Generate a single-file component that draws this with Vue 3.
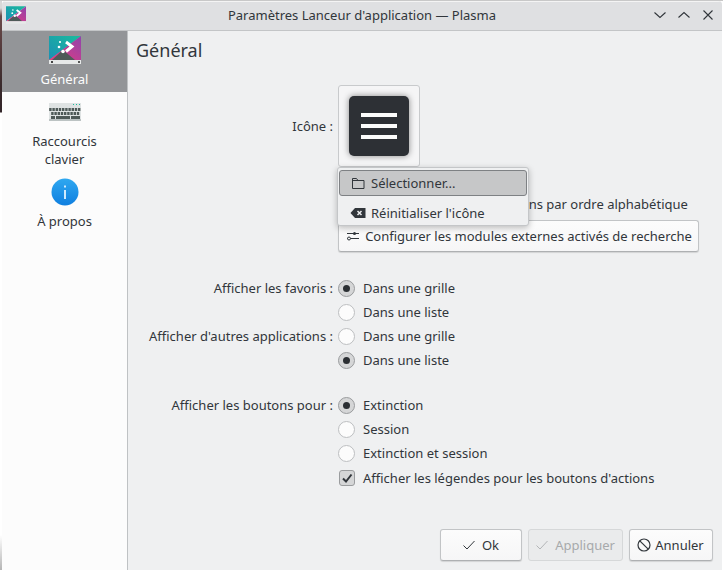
<script setup>
const nav = [
  { id: 'general', label: 'Général', active: true },
  { id: 'keys', label: 'Raccourcis clavier' },
  { id: 'about', label: 'À propos' }
]
const groups = [
  { label: 'Afficher les favoris :', gap: 24, items: [{ t: 'Dans une grille', on: true }, { t: 'Dans une liste' }] },
  { label: "Afficher d'autres applications :", gap: 0, items: [{ t: 'Dans une grille' }, { t: 'Dans une liste', on: true }] },
  { label: 'Afficher les boutons pour :', gap: 21, items: [{ t: 'Extinction', on: true }, { t: 'Session' }, { t: 'Extinction et session' }] }
]
</script>

<template>
  <div class="desktop">
    <div class="window">
      <header class="titlebar">
        <svg class="app-icon" width="20" height="18" viewBox="0 0 32 28">
          <defs>
            <linearGradient id="tealA" x1="0" y1="1" x2="1" y2="0"><stop offset="0" stop-color="#1b8fb5" /><stop offset="1" stop-color="#1abc9c" /></linearGradient>
            <linearGradient id="magA" x1="1" y1="0" x2="0" y2="1"><stop offset="0" stop-color="#8e44ad" /><stop offset="1" stop-color="#e93a7d" /></linearGradient>
          </defs>
          <polygon points="0,0 32,0 0,24" fill="url(#tealA)" />
          <polygon points="32,0 32,24 0,24" fill="url(#magA)" />
          <polygon points="3,24 14,14 26,24" fill="#4f5a58" />
          <path d="M17 6l6 4.500-6 5" fill="none" stroke="#fff" stroke-width="3" />
          <circle cx="11" cy="6" r="1.300" fill="#fff" /><circle cx="10" cy="11" r="1.500" fill="#fff" /><circle cx="14" cy="15" r="2" fill="#fff" />
          <rect y="24" width="32" height="4" fill="#e6e8e8" />
        </svg>
        <span class="title">Paramètres Lanceur d'application — Plasma</span>
        <div class="controls">
          <svg width="14" height="14" viewBox="0 0 14 14"><path d="M1.500 4.500l5.500 5 5.500-5" /></svg>
          <svg width="14" height="14" viewBox="0 0 14 14"><path d="M1.500 9.500l5.500-5 5.500 5" /></svg>
          <svg width="14" height="14" viewBox="0 0 14 14"><path d="M2.500 2.500l9 9M11.500 2.500l-9 9" /></svg>
        </div>
      </header>

      <div class="body">
        <nav class="sidebar">
          <div v-for="n in nav" :key="n.id" class="nav-item" :class="[n.id, { active: n.active }]">
            <svg v-if="n.id === 'general'" class="nav-icon" width="32" height="28" viewBox="0 0 32 28">
              <defs>
                <linearGradient id="tealB" x1="0" y1="1" x2="1" y2="0"><stop offset="0" stop-color="#1b8fb5" /><stop offset="1" stop-color="#1abc9c" /></linearGradient>
                <linearGradient id="magB" x1="1" y1="0" x2="0" y2="1"><stop offset="0" stop-color="#8e44ad" /><stop offset="1" stop-color="#e93a7d" /></linearGradient>
              </defs>
              <polygon points="0,0 32,0 0,24" fill="url(#tealB)" />
              <polygon points="32,0 32,24 0,24" fill="url(#magB)" />
              <polygon points="3,24 14,14 26,24" fill="#4f5a58" />
              <path d="M17 6l6 4.500-6 5" fill="none" stroke="#fff" stroke-width="3" />
              <circle cx="11" cy="6" r="1.100" fill="#fff" /><circle cx="10" cy="11" r="1.300" fill="#fff" /><circle cx="14" cy="15.500" r="1.800" fill="#fff" />
              <rect y="24" width="32" height="4" fill="#e6e8e8" />
              <rect x="2" y="25" width="2" height="2" fill="#444" /><rect x="29" y="25" width="2" height="2" fill="#555" />
            </svg>
            <svg v-else-if="n.id === 'keys'" class="nav-icon" width="32" height="18" viewBox="147 0 32 18">
              <rect x="147" y="0" width="32" height="18" fill="#dfe3e3" />
              <rect x="147" y="16" width="32" height="2" fill="#bcc3c3" />
              <rect x="171" y="1" width="1" height="1" fill="#1abc9c" /><rect x="174" y="1" width="1" height="1" fill="#1abc9c" /><rect x="177" y="1" width="1" height="1" fill="#1abc9c" />
              <g fill="#4f5a58" transform="translate(0 5)">
                <rect v-for="x in 10" :key="x" :x="144 + x * 3.2" y="0" width="2.4" height="3" />
                <rect v-for="x in 9" :key="'b' + x" :x="146 + x * 3.2" y="4" width="2.4" height="3" />
                <rect x="149" y="8" width="4" height="3" /><rect x="154" y="8" width="14" height="3" /><rect x="169" y="8" width="9" height="3" />
              </g>
            </svg>
            <svg v-else class="nav-icon" width="28" height="28" viewBox="0 0 28 28">
              <defs><linearGradient id="info" x1="0" y1="0" x2="0" y2="1"><stop offset="0" stop-color="#2fa8f0" /><stop offset="1" stop-color="#0f7fe0" /></linearGradient></defs>
              <circle cx="14" cy="14" r="13.500" fill="url(#info)" />
              <rect x="13" y="12" width="2" height="9" fill="#cfeafd" />
              <rect x="13" y="7.500" width="2" height="2" fill="#cfeafd" />
            </svg>
            <span class="nav-label">{{ n.label }}</span>
          </div>
        </nav>

        <main class="content">
          <h1>Général</h1>
          <div class="form">
            <div class="row icon-row">
              <label class="lbl">Icône :</label>
              <div class="field">
                <div class="icon-btn">
                  <div class="menu-glyph"><span></span><span></span><span></span></div>
                </div>
                <div class="popup">
                  <div class="popup-item hover">
                    <svg width="16" height="16" viewBox="0 0 16 16"><path d="M2.500 13.500v-10h4l1.500 2h6v8z M2.500 5.500h5.500" fill="none" stroke="#31363b" /></svg>
                    <span>Sélectionner...</span>
                  </div>
                  <div class="popup-item">
                    <svg width="16" height="16" viewBox="0 0 16 16"><path d="M5 3h10.500v10H5L0.500 8z" fill="#31363b" /><path d="M7.500 6l4 4M11.500 6l-4 4" stroke="#eff0f1" stroke-width="1.500" /></svg>
                    <span>Réinitialiser l'icône</span>
                  </div>
                </div>
              </div>
            </div>

            <div class="row check-row">
              <div class="lbl"></div>
              <div class="field check"><span class="box"></span><span>Toujours trier les applications par ordre alphabétique</span></div>
            </div>

            <div class="row cfg-row">
              <div class="lbl"></div>
              <div class="field">
                <button class="btn cfg">
                  <svg width="16" height="16" viewBox="0 0 16 16"><path d="M2 5.500h12M2 10.500h12" stroke="#31363b" fill="none" /><circle cx="9.500" cy="5.500" r="1.500" fill="#31363b" /><circle cx="4" cy="10.500" r="1.500" fill="#eff0f1" stroke="#31363b" /></svg>
                  Configurer les modules externes activés de recherche
                </button>
              </div>
            </div>

            <div v-for="g in groups" :key="g.label" class="group" :style="{ marginTop: g.gap + 'px' }">
              <div v-for="(it, i) in g.items" :key="i" class="row opt">
                <label class="lbl">{{ i === 0 ? g.label : '' }}</label>
                <div class="field radio-line">
                  <span class="radio" :class="{ on: it.on }"></span><span>{{ it.t }}</span>
                </div>
              </div>
            </div>

            <div class="row opt last-check">
              <div class="lbl"></div>
              <div class="field radio-line">
                <span class="box checked">
                  <svg width="12" height="12" viewBox="0 0 12 12"><path d="M2 6.500l3 3 5.500-7" fill="none" stroke="#31363b" stroke-width="2" /></svg>
                </span>
                <span>Afficher les légendes pour les boutons d'actions</span>
              </div>
            </div>
          </div>

          <footer class="actions">
            <button class="btn ok">
              <svg width="16" height="16" viewBox="0 0 16 16"><path d="M2.500 8.500l3.500 3.500 7.500-8" fill="none" stroke="#31363b" /></svg>Ok
            </button>
            <button class="btn apply" disabled>
              <svg width="16" height="16" viewBox="0 0 16 16"><path d="M2.500 8.500l3.500 3.500 7.500-8" fill="none" stroke="#b3b5b7" /></svg>Appliquer
            </button>
            <button class="btn cancel">
              <svg width="16" height="16" viewBox="0 0 16 16"><circle cx="8" cy="8" r="6" fill="none" stroke="#31363b" stroke-width="1.200" /><path d="M3.800 3.800l8.400 8.400" stroke="#31363b" stroke-width="1.200" /></svg>Annuler
            </button>
          </footer>
        </main>
      </div>
    </div>
  </div>
</template>

<style>
html, body { margin: 0; padding: 0; overflow: hidden; }
</style>

<style scoped>
.desktop {
  width: 723px;
  height: 570px;
  overflow: hidden;
  box-sizing: border-box;
  padding: 1px 1px 0 2px;
  background:
    linear-gradient(#c8c8c8, #c8c8c8) top left / 100% 1px no-repeat,
    linear-gradient(180deg, #d8d8d8 0, #d8d8d8 8px, #6b4a4a 16px, #3a2a2c 85px, #33262a 112px, #ffffff 113px, #ffffff 535px, #b5b5b5 570px) top left / 2px 100% no-repeat,
    #ffffff;
  font-family: "Noto Sans", sans-serif;
  font-size: 13px;
  color: #31363b;
}
.window { height: 569px; display: flex; flex-direction: column; border-radius: 4px 4px 0 0; overflow: hidden; background: #eff0f1; }
.titlebar {
  height: 30px;
  flex: none;
  box-sizing: border-box;
  display: flex;
  align-items: center;
  justify-content: center;
  position: relative;
  background: #dfe0e2;
  border-bottom: 1px solid #c3c5c7;
  border-top: 1px solid #f4f4f4;
}
.app-icon { position: absolute; left: 4px; top: 4px; }
.title { font-size: 13px; line-height: 18px; margin-top: -2px; color: #31363b; }
.controls { position: absolute; right: 7px; top: 6px; display: flex; gap: 10px; }
.controls svg { fill: none; stroke: #31363b; stroke-width: 1.1; }
.body { flex: 1; display: flex; min-height: 0; }
.sidebar { width: 125px; flex: none; background: #fcfcfc; border-right: 1px solid #bfc2c4; }
.nav-item { display: flex; flex-direction: column; align-items: center; text-align: center; line-height: 18px; }
.nav-item.general { height: 61px; padding-top: 5px; box-sizing: border-box; background: #939598; color: #fcfcfc; }
.nav-item.general .nav-label { margin-top: 6px; }
.nav-item.keys { height: 86px; padding-top: 11px; box-sizing: border-box; }
.nav-item.keys .nav-label { margin-top: 11px; padding: 0 25px; }
.nav-item.about .nav-label { margin-top: 6px; }
.nav-icon { display: block; flex: none; }

.content { flex: 1; position: relative; display: flex; flex-direction: column; min-width: 0; }
h1 { margin: 0; padding: 7px 0 0 8px; font-size: 18px; font-weight: 400; line-height: 24px; height: 24px; }
.form { margin-top: 23px; }
.row { display: flex; }
.lbl { width: 210px; flex: none; text-align: right; padding-right: 5px; box-sizing: border-box; line-height: 24px; }
.field { position: relative; }
.icon-row { height: 82px; align-items: center; }
.icon-btn {
  width: 82px; height: 82px; box-sizing: border-box; background: #f5f5f6;
  border: 1px solid #c8cacc; border-radius: 3px;
  display: flex; align-items: center; justify-content: center;
}
.menu-glyph {
  width: 60px; height: 60px; border-radius: 5px; background: #2d3035;
  box-shadow: 0 0 6px rgba(0,0,0,.45);
  display: flex; flex-direction: column; justify-content: center; align-items: center; gap: 7px;
}
.menu-glyph span { display: block; width: 36px; height: 4px; background: #fcfcfc; }
.popup {
  position: absolute; left: -1px; top: 82px; width: 192px; height: 59px; box-sizing: border-box;
  background: #eff0f1; border: 1px solid #c4c6c8; border-radius: 3px;
  box-shadow: 0 2px 6px rgba(0,0,0,.25); z-index: 2; padding: 2px 0 0 1px;
}
.popup-item { height: 26px; width: 188px; display: flex; align-items: center; gap: 5px; padding-left: 11px; box-sizing: border-box; }
.popup-item + .popup-item { margin-top: 4px; }
.popup-item.hover { background: #c6c7c8; border: 1px solid #7e8184; border-radius: 3px; padding-left: 10px; }
.check-row { margin-top: 25px; height: 24px; }
.check { display: flex; align-items: center; gap: 10px; line-height: 24px; }
.box { width: 15px; height: 15px; border: 1px solid #b5b7b9; border-radius: 3px; box-sizing: border-box; background: #fcfcfc; display: flex; align-items: center; justify-content: center; flex: none; }
.box.checked { width: 16px; height: 16px; background: #d5d6d7; border-color: #9a9c9e; }
.cfg-row { margin-top: 4px; }
.btn {
  font: inherit; color: #31363b; box-sizing: border-box; height: 32px;
  display: inline-flex; align-items: center; justify-content: center; gap: 4px;
  background: linear-gradient(#fcfcfc, #f6f6f7);
  border: 1px solid #c2c4c6; border-bottom-color: #aeb0b2; border-radius: 3px;
  box-shadow: 0 1px 1px rgba(0,0,0,.12); padding: 0;
}
.cfg { width: 361px; }
.group .row { height: 24px; }
.opt { height: 24px; }
.radio-line { display: flex; align-items: center; gap: 8px; line-height: 24px; }
.radio { width: 17px; height: 17px; box-sizing: border-box; border: 1px solid #bdbfc1; border-radius: 50%; background: #fcfcfc; flex: none; display: flex; align-items: center; justify-content: center; }
.radio.on { background: #d5d6d7; border-color: #9a9c9e; }
.radio.on::after { content: ""; width: 7px; height: 7px; border-radius: 50%; background: #2b2f33; }
.last-check { margin-top: 1px; }
.last-check .radio-line { padding-left: 1px; gap: 8px; }
.actions { position: absolute; right: 9px; bottom: 9px; display: flex; gap: 6px; }
.ok { width: 82px; gap: 5px; padding-right: 2px; }
.apply { width: 95px; gap: 5px; padding-right: 2px; background: #eaebec; border-color: #d6d8d9; box-shadow: none; color: #a7a9ab; }
.cancel { width: 84px; gap: 3px; padding-right: 2px; }
</style>
